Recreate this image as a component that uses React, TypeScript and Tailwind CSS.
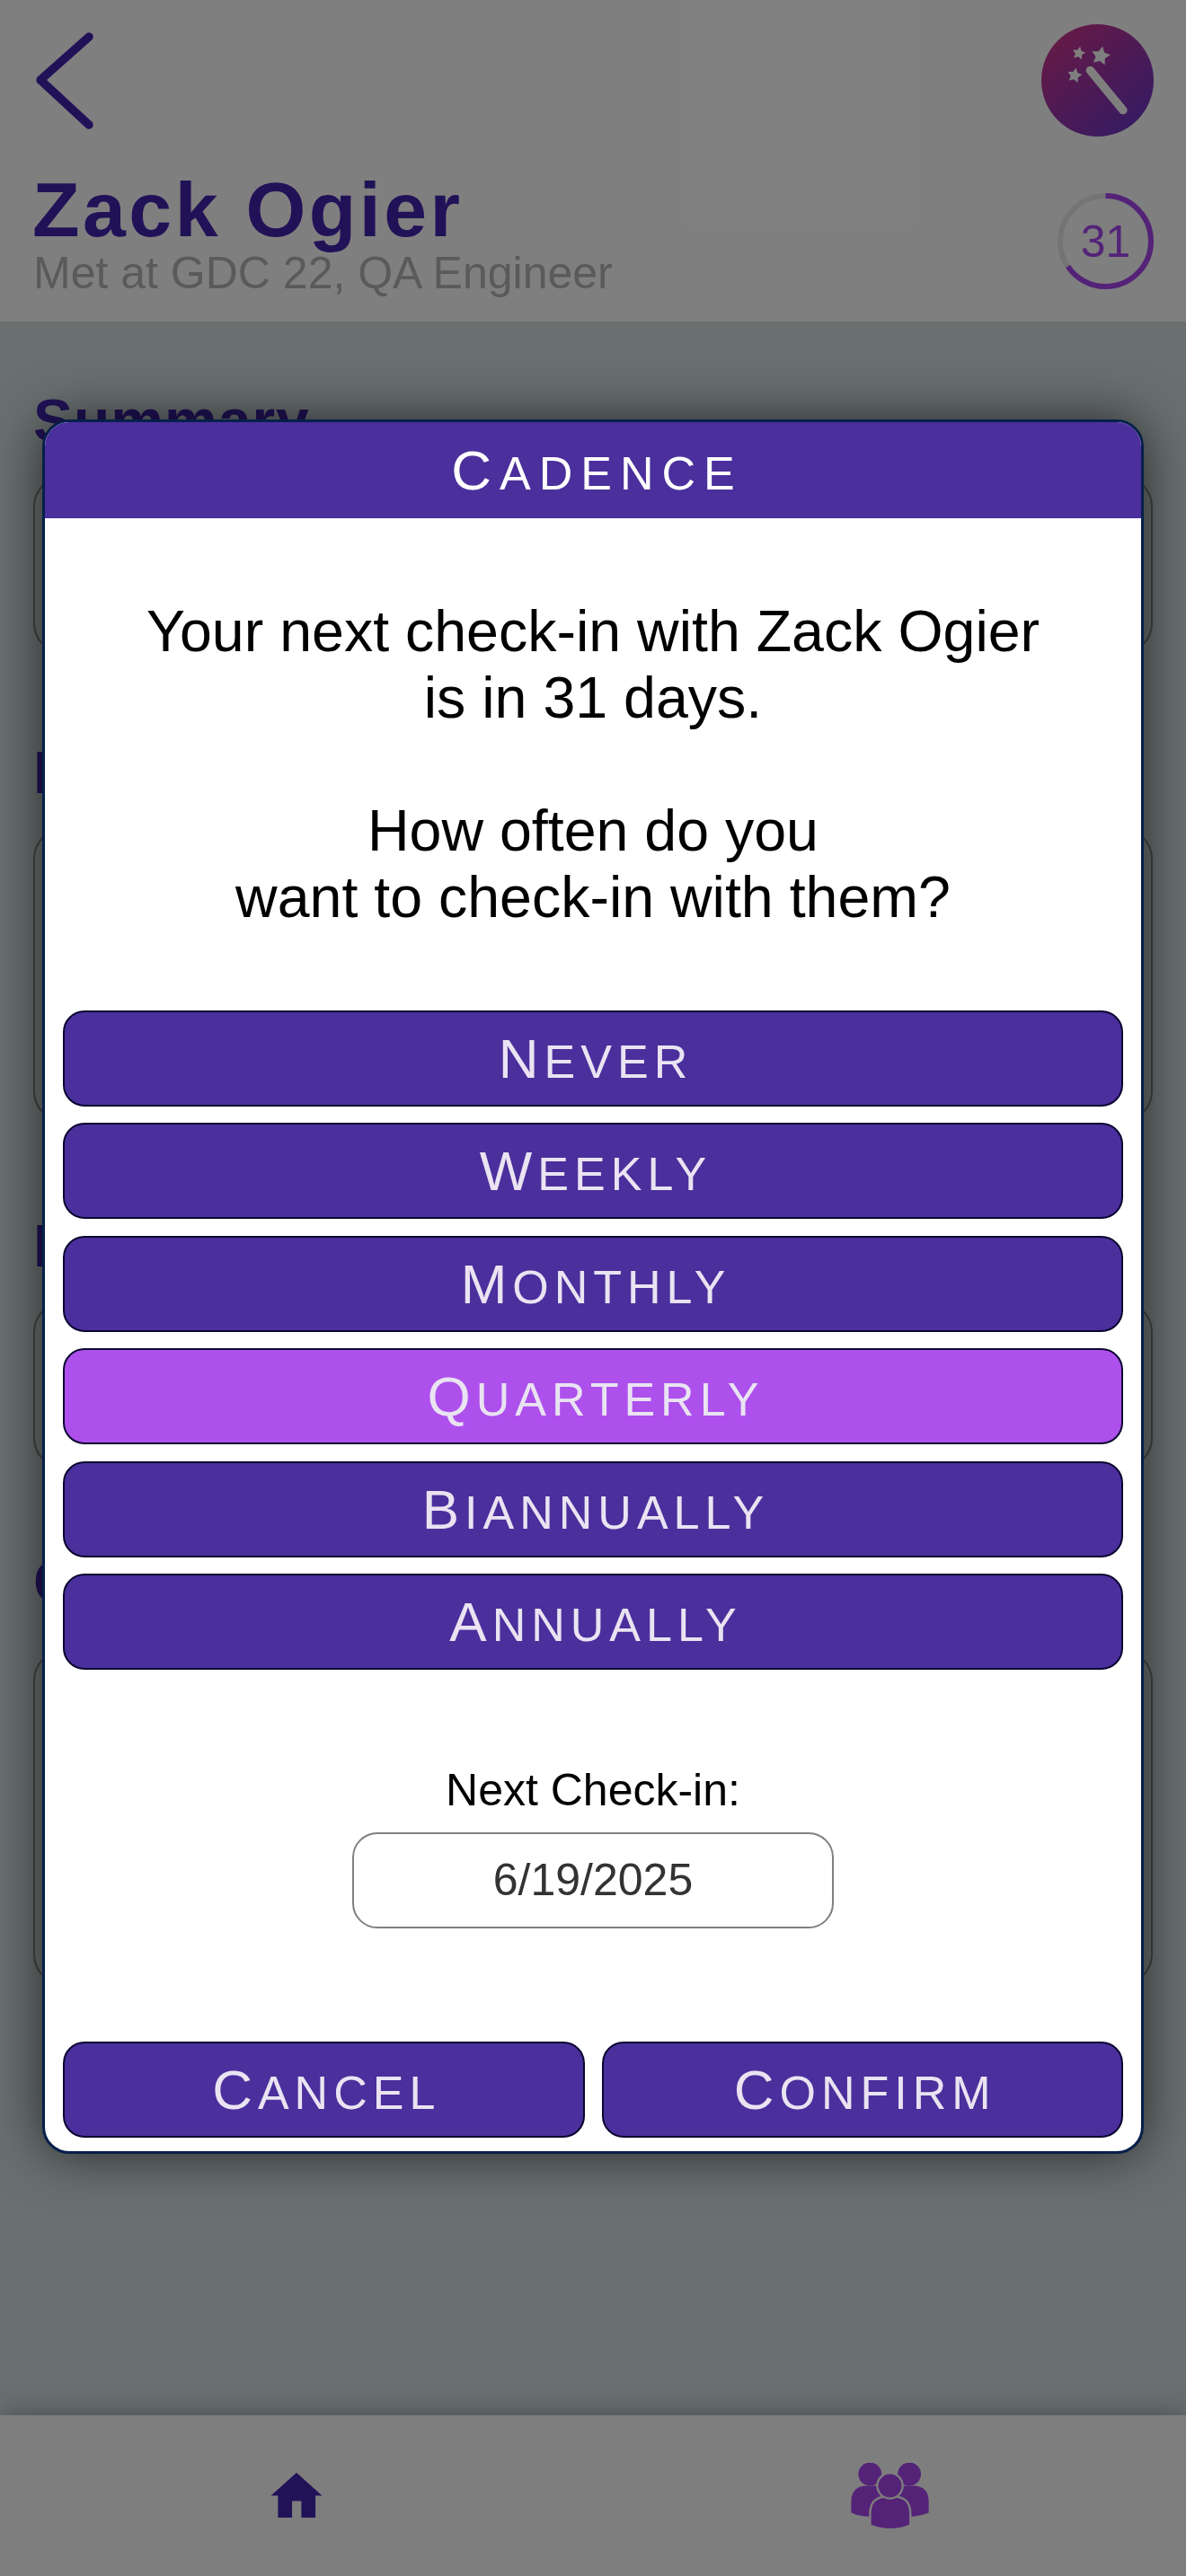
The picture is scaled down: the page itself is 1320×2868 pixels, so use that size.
const stars: [number, number, number][] = [
  [375, 186, 33],
  [302, 177, 23],
  [288, 251, 26],
];

function starPoints(cx: number, cy: number, r: number) {
  const pts: string[] = [];
  for (let i = 0; i < 10; i++) {
    const a = -Math.PI / 2 + 0.2 + (i * Math.PI) / 5;
    const rr = i % 2 === 0 ? r : r * 0.5;
    pts.push(`${cx + rr * Math.cos(a)},${cy + rr * Math.sin(a)}`);
  }
  return pts.join(" ");
}

function Wand() {
  return (
    <svg viewBox="177 80 375 375" className="h-[125px] w-[125px]">
      <defs>
        <linearGradient id="wand" x1="0.15" y1="0.1" x2="0.85" y2="0.9">
          <stop offset="0" stopColor="#c8348f" />
          <stop offset="1" stopColor="#6e36c4" />
        </linearGradient>
      </defs>
      <circle cx="364.5" cy="267.5" r="187.5" fill="url(#wand)" />
      {stars.map(([x, y, r]) => (
        <polygon key={x} points={starPoints(x, y, r)} fill="#ffffff" />
      ))}
      <line x1="340" y1="234" x2="450" y2="367" stroke="#ffffff" strokeWidth="28" strokeLinecap="round" />
    </svg>
  );
}

function Ring() {
  const r = 50.5;
  const c = 2 * Math.PI * r;
  return (
    <div className="relative flex h-[107px] w-[107px] items-center justify-center">
      <svg viewBox="0 0 107 107" className="absolute inset-0 h-full w-full -rotate-90">
        <circle cx="53.5" cy="53.5" r={r} fill="none" stroke="#e8e8e8" strokeWidth="6" />
        <circle cx="53.5" cy="53.5" r={r} fill="none" stroke="#a846f0" strokeWidth="6" strokeDasharray={`${c * 0.655} ${c}`} />
      </svg>
      <span className="text-[50px] leading-none text-[#a846f0]">31</span>
    </div>
  );
}

function Section({ title, card, className }: { title: string; card: string; className?: string }) {
  return (
    <section className={className}>
      <h2 className="h-[102px] text-[66px] leading-[80px] font-bold tracking-[1px] text-[#4224b0]">{title}</h2>
      <div className={`${card} rounded-[34px] border-2 border-[#888888]`} />
    </section>
  );
}

function Btn({ label, active, className }: { label: string; active?: boolean; className?: string }) {
  return (
    <button
      className={`flex h-[107px] items-center justify-center rounded-[24px] border-2 border-[#0a0630] text-[#e9e3f2] ${active ? "bg-[#ad50ec]" : "bg-[#4b2f9c]"} ${className ?? ""}`}
    >
      <span className="block pl-[6px] text-[52px] tracking-[6px] uppercase first-letter:text-[62px]">{label}</span>
    </button>
  );
}

export default function App() {
  return (
    <div className="relative h-[2868px] w-[1320px] overflow-hidden bg-[#d4e0e0] [font-family:'Liberation_Sans',sans-serif]">
      <div className="flex h-full flex-col">
        <header className="h-[358px] bg-white pt-[27px] pr-[36px] pl-[37px]">
          <div className="flex h-[125px] items-center justify-between">
            <svg viewBox="0 0 70 110" className="h-[110px] w-[70px]" fill="none" stroke="#4224b0" strokeWidth="9.5" strokeLinecap="round" strokeLinejoin="round">
              <path d="M62 6 L8 54 L62 104" />
            </svg>
            <Wand />
          </div>
          <div className="mt-[36px] flex items-start justify-between">
            <div>
              <h1 className="-ml-[1px] text-[86px] leading-[90px] font-bold tracking-[3.5px] text-[#4224b0]">Zack Ogier</h1>
              <p className="-mt-[4px] text-[50px] leading-[60px] text-[#b4b4b4]">Met at GDC 22, QA Engineer</p>
            </div>
            <div className="mt-[27px]">
              <Ring />
            </div>
          </div>
        </header>
        <main className="flex-1 px-[37px] pt-[70px]">
          <Section title="Summary" card="h-[198px]" />
          <Section title="Notes" card="h-[327px]" className="mt-[92px]" />
          <Section title="Links" card="h-[186px]" className="mt-[98px]" />
          <Section title="Conversations" card="mt-[14px] h-[373px]" className="mt-[86px]" />
        </main>
      </div>

      <nav className="absolute inset-x-0 bottom-0 flex h-[179px] bg-[#fcfcfc] shadow-[0_0_30px_rgba(0,0,0,0.35)]">
        <div className="flex flex-1 items-center justify-center">
          <svg viewBox="0 0 58 52" className="h-[51px] w-[58px]">
            <path d="M29 0 L58 26 H50.5 V51 H34.5 V32 H24 V51 H8 V26 H0 Z" fill="#4224b0" />
          </svg>
        </div>
        <div className="flex flex-1 items-center justify-center">
          <svg viewBox="140 275 260 220" className="h-[73px] w-[87px]">
            <circle cx="203" cy="313" r="39" fill="#a846f0" />
            <circle cx="335" cy="313" r="39" fill="#a846f0" />
            <path d="M140 442 V405 Q140 352 195 352 H345 Q400 352 400 405 V442 Q370 455 340 455 H200 Q170 455 140 442 Z" fill="#a846f0" />
            <path d="M207 482 V445 Q207 392 260 392 H282 Q335 392 335 445 V482 Q271 508 207 482 Z" fill="#a846f0" stroke="#fcfcfc" strokeWidth="14" paintOrder="stroke" />
            <circle cx="270" cy="352" r="39" fill="#a846f0" stroke="#fcfcfc" strokeWidth="14" paintOrder="stroke" />
          </svg>
        </div>
      </nav>

      <div className="absolute inset-0 flex items-start justify-center bg-black/50 pt-[467px]">
        <div className="flex h-[1931px] w-[1226px] flex-col overflow-hidden rounded-[30px] border-[3px] border-[#06204a] bg-white shadow-[0_0_60px_rgba(0,0,0,0.65)]">
          <div className="flex h-[107px] items-center justify-center bg-[#4b2f9c] text-white">
            <span className="block pl-[9px] text-[52px] tracking-[9px] uppercase first-letter:text-[62px]">Cadence</span>
          </div>
          <div className="pt-[89px] text-center text-[64.5px] leading-[74px] text-black">
            <p>Your next check-in with Zack Ogier</p>
            <p>is in 31 days.</p>
            <p className="mt-[74px]">How often do you</p>
            <p>want to check-in with them?</p>
          </div>
          <div className="mt-[89px] flex flex-col gap-[18.4px] px-[20px]">
            <Btn label="Never" />
            <Btn label="Weekly" />
            <Btn label="Monthly" />
            <Btn label="Quarterly" active />
            <Btn label="Biannually" />
            <Btn label="Annually" />
          </div>
          <div className="mt-[104px] flex flex-col items-center">
            <p className="text-[50px] leading-[60px] text-black">Next Check-in:</p>
            <div className="mt-[17px] flex h-[107px] w-[536px] items-center justify-center rounded-[28px] border-2 border-[#808080] text-[50px] text-[#333333]">
              6/19/2025
            </div>
          </div>
          <div className="mt-auto flex gap-[19px] px-[20px] pb-[15px]">
            <Btn label="Cancel" className="flex-1" />
            <Btn label="Confirm" className="flex-1" />
          </div>
        </div>
      </div>
    </div>
  );
}
